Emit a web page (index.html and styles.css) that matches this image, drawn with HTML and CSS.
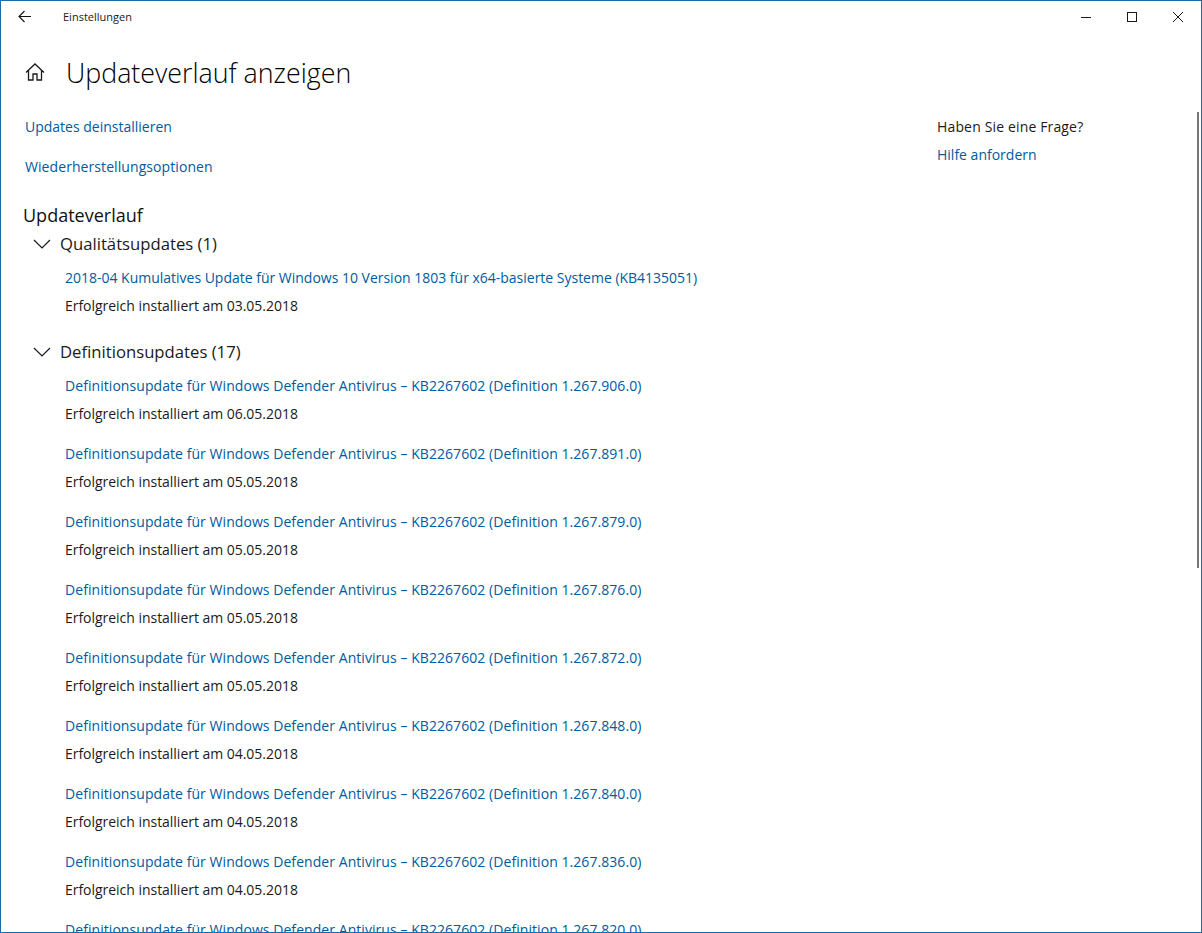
FILE: index.html
```html
<!DOCTYPE html>
<html lang="de">
<head>
<meta charset="utf-8">
<title>Einstellungen</title>
<link rel="stylesheet" href="styles.css">
</head>
<body>
<div class="window">
  <header class="titlebar">
    <div class="title-left">
      <svg class="back" width="16" height="14" viewBox="0 0 16 14"><path d="M14 6.500H2M7.500 1 2 6.500 7.500 12" fill="none" stroke="#111" stroke-width="1.100"/></svg>
      <span class="app-name">Einstellungen</span>
    </div>
    <div class="controls">
      <svg width="12" height="12" viewBox="0 0 12 12"><path d="M1 6.500H11" stroke="#1a1a1a" fill="none"/></svg>
      <svg width="12" height="12" viewBox="0 0 12 12"><rect x="1.500" y="1.500" width="9" height="9" stroke="#1a1a1a" fill="none"/></svg>
      <svg width="12" height="12" viewBox="0 0 12 12"><path d="M1 1 11 11M11 1 1 11" stroke="#1a1a1a" fill="none"/></svg>
    </div>
  </header>
  <div class="page-head">
    <svg class="home" width="20" height="20" viewBox="0 0 20 20"><path d="M1 10.500 10 2l9 8.500M3.500 8.500V18H8v-6h4v6h4.500V8.500" fill="none" stroke="#1a1a1a" stroke-width="1.300"/></svg>
    <h1>Updateverlauf anzeigen</h1>
  </div>
  <div class="columns">
    <main class="main">
      <a class="top-link">Updates deinstallieren</a>
      <a class="top-link wide">Wiederherstellungsoptionen</a>
      <h2>Updateverlauf</h2>
      <section>
        <h3><svg class="chev" width="18" height="10" viewBox="0 0 18 10"><path d="M1 1l8 8 8-8" fill="none" stroke="#1a1a1a" stroke-width="1.200"/></svg>Qualitätsupdates (1)</h3>
        <div class="item"><a class="quality">2018-04 Kumulatives Update für Windows 10 Version 1803 für x64-basierte Systeme (KB4135051)</a><p>Erfolgreich installiert am 03.05.2018</p></div>
      </section>
      <section>
        <h3><svg class="chev" width="18" height="10" viewBox="0 0 18 10"><path d="M1 1l8 8 8-8" fill="none" stroke="#1a1a1a" stroke-width="1.200"/></svg>Definitionsupdates (17)</h3>
        <div class="item"><a>Definitionsupdate für Windows Defender Antivirus – KB2267602 (Definition 1.267.906.0)</a><p>Erfolgreich installiert am 06.05.2018</p></div>
        <div class="item"><a>Definitionsupdate für Windows Defender Antivirus – KB2267602 (Definition 1.267.891.0)</a><p>Erfolgreich installiert am 05.05.2018</p></div>
        <div class="item"><a>Definitionsupdate für Windows Defender Antivirus – KB2267602 (Definition 1.267.879.0)</a><p>Erfolgreich installiert am 05.05.2018</p></div>
        <div class="item"><a>Definitionsupdate für Windows Defender Antivirus – KB2267602 (Definition 1.267.876.0)</a><p>Erfolgreich installiert am 05.05.2018</p></div>
        <div class="item"><a>Definitionsupdate für Windows Defender Antivirus – KB2267602 (Definition 1.267.872.0)</a><p>Erfolgreich installiert am 05.05.2018</p></div>
        <div class="item"><a>Definitionsupdate für Windows Defender Antivirus – KB2267602 (Definition 1.267.848.0)</a><p>Erfolgreich installiert am 04.05.2018</p></div>
        <div class="item"><a>Definitionsupdate für Windows Defender Antivirus – KB2267602 (Definition 1.267.840.0)</a><p>Erfolgreich installiert am 04.05.2018</p></div>
        <div class="item"><a>Definitionsupdate für Windows Defender Antivirus – KB2267602 (Definition 1.267.836.0)</a><p>Erfolgreich installiert am 04.05.2018</p></div>
        <div class="item"><a>Definitionsupdate für Windows Defender Antivirus – KB2267602 (Definition 1.267.820.0)</a><p>Erfolgreich installiert am 04.05.2018</p></div>
      </section>
    </main>
    <aside class="help">
      <p>Haben Sie eine Frage?</p>
      <a>Hilfe anfordern</a>
    </aside>
  </div>
  <div class="scrollbar"></div>
</div>
</body>
</html>
```
FILE: styles.css
```css
* { box-sizing: border-box; }
html, body { margin: 0; padding: 0; background: #fff; }
body { font-family: "Open Sans", "Noto Sans", sans-serif; font-size: 14px; color: #1a1a1a; overflow: hidden; }
.window { position: relative; width: 1202px; height: 933px; border: 1px solid #1b6ca8; overflow: hidden; background: #fff; }
.titlebar { display: flex; justify-content: space-between; align-items: center; height: 31px; }
.title-left { display: flex; align-items: center; padding-left: 16px; }
.back { margin-right: 30px; }
.app-name { font-size: 11px; }
.controls { display: flex; gap: 34px; padding-right: 17px; }
.page-head { display: flex; align-items: center; height: 48px; margin-top: 16px; padding-left: 24px; }
.home { margin-right: 21px; }
h1 { margin: 0; font-size: 26.8px; font-weight: 300; color: #000; }
.columns { display: flex; justify-content: space-between; }
.main { padding-left: 24px; }
a { color: #005a9e; display: block; }
.top-link { line-height: 20px; margin-top: 20px; }
.top-link:first-child { margin-top: 21px; }
.wide { letter-spacing: .08px; }
h2 { margin: 26px 0 0 -2px; font-size: 18px; font-weight: 400; line-height: 24px; color: #111; }
h3 { display: flex; align-items: center; margin: 3px 0 0; font-size: 16.7px; font-weight: 400; line-height: 28px; color: #1a1a1a; padding-left: 8px; }
.chev { margin-right: 9px; }
section { margin-bottom: 18px; }
.item { padding-left: 40px; margin-bottom: 12px; }
.item a { line-height: 28px; margin-top: 6px; letter-spacing: .06px; }
.item a.quality { letter-spacing: -.01px; }
.item + .item a { margin-top: 0; }
.item p { margin: 0; line-height: 28px; letter-spacing: -.03px; }
.help { width: 264px; padding-top: 17px; }
.help p { margin: 0; line-height: 28px; letter-spacing: .15px; }
.help a { line-height: 28px; }
.scrollbar { position: absolute; right: 2px; top: 111px; width: 2px; height: 456px; background: #767676; }
```
